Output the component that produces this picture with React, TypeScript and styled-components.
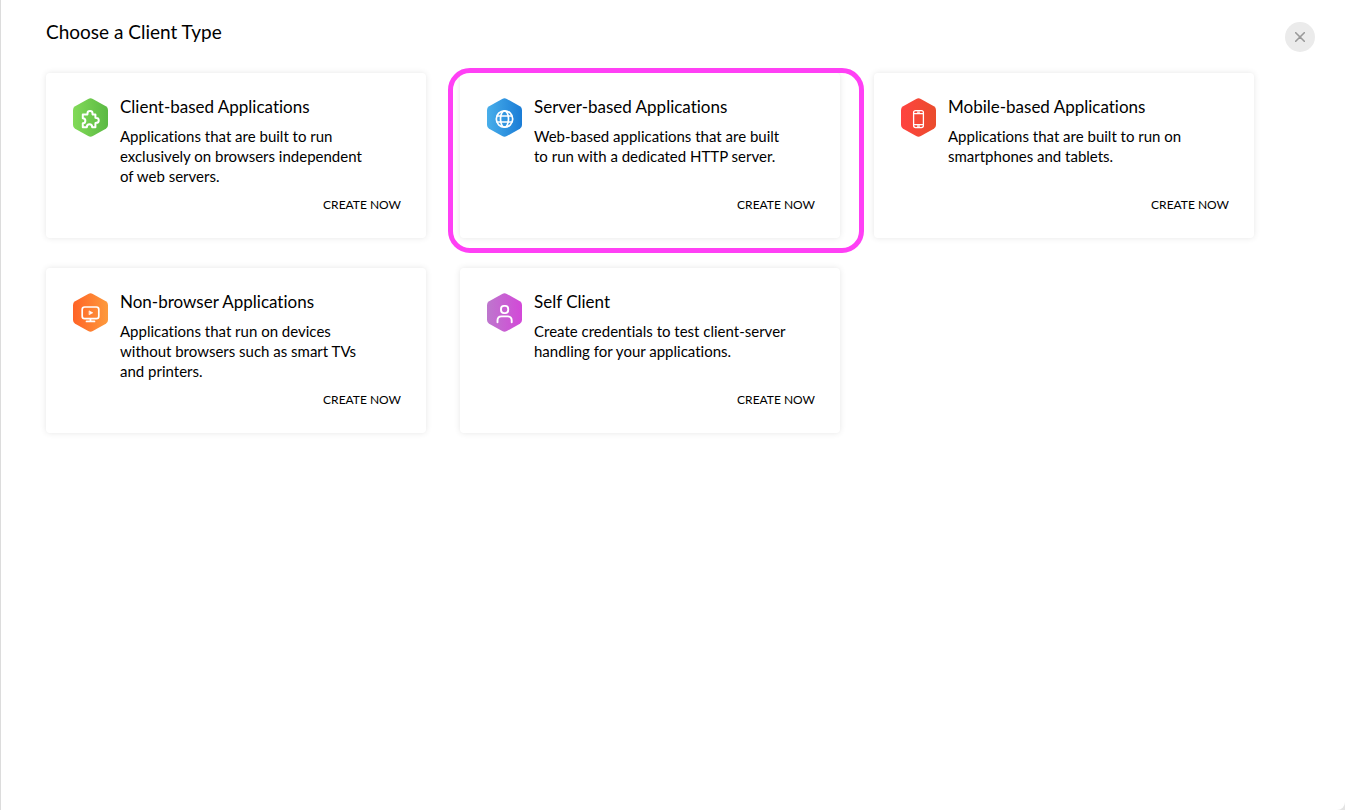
import React from "react";
import styled, { createGlobalStyle } from "styled-components";

const GlobalStyle = createGlobalStyle`
  *, *::before, *::after { box-sizing: border-box; }
  body { margin: 0; background: #e4e4e4; }
  body, button {
    font-family: Lato, "Open Sans", sans-serif;
    font-variant-ligatures: none;
    color: #000;
  }
`;

const Page = styled.main`
  min-height: 100vh;
  padding: 19px 30px 40px 45px;
  background: #fff;
  border-left: 1px solid #dcdcdc;
  border-bottom-right-radius: 8px;
`;

const Header = styled.header`
  display: flex;
  justify-content: space-between;
  align-items: flex-start;
  height: 54px;
`;

const Heading = styled.h1`
  margin: 0;
  font-size: 19px;
  font-weight: 400;
  line-height: 26px;
`;

const CloseButton = styled.button`
  display: flex;
  align-items: center;
  justify-content: center;
  width: 30px;
  height: 30px;
  margin-top: 3px;
  padding: 0;
  border: 0;
  border-radius: 50%;
  background: #ebebeb;
  cursor: pointer;
`;

const CardGrid = styled.section`
  display: grid;
  grid-template-columns: repeat(auto-fill, 380px);
  gap: 30px 34px;
`;

const Card = styled.article`
  position: relative;
  display: flex;
  gap: 12px;
  min-height: 165px;
  padding: 23px 25px 21px 27px;
  border-radius: 4px;
  background: #fff;
  box-shadow: 0 0 6px rgba(0, 0, 0, 0.1);
`;

const Highlight = styled.span`
  position: absolute;
  inset: -5px -24px -15px -12px;
  border: 5px solid #ff40f5;
  border-radius: 22px;
  pointer-events: none;
`;

const Badge = styled.svg`
  flex: none;
  width: 35px;
  height: 39px;
  margin-top: 2px;
`;

const CardBody = styled.div`
  display: flex;
  flex: 1;
  flex-direction: column;
`;

const CardTitle = styled.h2`
  margin: 0 0 9px;
  font-size: 17px;
  font-weight: 400;
  line-height: 21px;
`;

const Description = styled.p`
  max-width: 256px;
  margin: 0;
  font-size: 15px;
  line-height: 20px;
`;

const CreateButton = styled.button`
  align-self: flex-end;
  margin-top: auto;
  padding: 0;
  border: 0;
  background: none;
  font-size: 12px;
  line-height: 24px;
  cursor: pointer;
`;

type ClientType = {
  id: string;
  title: string;
  description: string;
  colors: [string, string];
  glyph: React.ReactNode;
  highlighted?: boolean;
};

const clientTypes: ClientType[] = [
  {
    id: "client",
    title: "Client-based Applications",
    description:
      "Applications that are built to run exclusively on browsers independent of web servers.",
    colors: ["#82da58", "#5ab943"],
    glyph: (
      <path
        strokeWidth="2"
        d="M9.8 16.6H13.8C14.6 16.6 14.5 16 14.5 15.2C14.5 12.1 19.5 12.1 19.5 15.2C19.5 16 19.4 16.6 20.2 16.6H22.4V19.4C22.4 20.1 23 20 23.4 20C26.5 20 26.5 24.8 23.4 24.8C23 24.8 22.4 24.7 22.4 25.4V29.2H19.2C19.2 25.2 13.8 25.2 13.8 29.2H9.8V25.2C13.2 25.2 13.2 20.2 9.8 20.2Z"
      />
    ),
  },
  {
    id: "server",
    title: "Server-based Applications",
    description: "Web-based applications that are built to run with a dedicated HTTP server.",
    colors: ["#48aeea", "#1a7cd6"],
    highlighted: true,
    glyph: (
      <>
        <circle cx="17.5" cy="21" r="8.2" />
        <ellipse cx="17.5" cy="21" rx="4" ry="8.2" />
        <path d="M10.3 18H24.7M10.3 24H24.7" />
      </>
    ),
  },
  {
    id: "mobile",
    title: "Mobile-based Applications",
    description: "Applications that are built to run on smartphones and tablets.",
    colors: ["#ff4340", "#ea4c2c"],
    glyph: (
      <g strokeWidth="1.3">
        <rect x="12.6" y="12.6" width="9.8" height="17" rx="2" />
        <path d="M12.6 15.6H22.4M12.6 26.6H22.4M16.5 14.1H18.5M16.5 28.1H18.5" />
      </g>
    ),
  },
  {
    id: "nonbrowser",
    title: "Non-browser Applications",
    description: "Applications that run on devices without browsers such as smart TVs and printers.",
    colors: ["#ff6326", "#fd9a3c"],
    glyph: (
      <>
        <rect x="9.2" y="14" width="16.6" height="11.6" rx="2.4" />
        <path d="M17.5 25.8V28.2M13.5 28.4H21.5" />
        <path d="M16.4 18L19.8 19.8L16.4 21.6Z" fill="#fff" strokeWidth=".6" />
      </>
    ),
  },
  {
    id: "self",
    title: "Self Client",
    description: "Create credentials to test client-server handling for your applications.",
    colors: ["#bd77cd", "#d348d8"],
    glyph: (
      <g strokeWidth="1.9">
        <rect x="14" y="12.9" width="7.2" height="7.2" rx="3" />
        <path d="M10.5 29.2V27.6C10.5 24.8 12 23.4 14.6 23.4H20.6C23.2 23.4 24.7 24.8 24.7 27.6V29.2" />
      </g>
    ),
  },
];

function HexBadge({ id, colors, children }: { id: string; colors: [string, string]; children: React.ReactNode }) {
  return (
    <Badge viewBox="0 0 35 39" aria-hidden="true">
      <defs>
        <linearGradient id={`hex-${id}`}>
          <stop offset="0" stopColor={colors[0]} />
          <stop offset="1" stopColor={colors[1]} />
        </linearGradient>
      </defs>
      <path
        fill={`url(#hex-${id})`}
        d="M15.2.9Q17.5-.3 19.8.9L32.9 8.2Q35 9.5 35 11.9V27.1Q35 29.5 32.9 30.8L19.8 38.1Q17.5 39.3 15.2 38.1L2.1 30.8Q0 29.5 0 27.1V11.9Q0 9.5 2.1 8.2Z"
      />
      <g fill="none" stroke="#fff" strokeWidth="1.7" strokeLinejoin="round" strokeLinecap="round">
        {children}
      </g>
    </Badge>
  );
}

export default function App() {
  return (
    <>
      <GlobalStyle />
      <Page>
        <Header>
          <Heading>Choose a Client Type</Heading>
          <CloseButton type="button" aria-label="Close">
            <svg width="10" height="10" viewBox="0 0 10 10" aria-hidden="true">
              <path d="M.7.7L9.3 9.3M9.3.7L.7 9.3" stroke="#999" strokeWidth="1.6" strokeLinecap="round" />
            </svg>
          </CloseButton>
        </Header>
        <CardGrid>
          {clientTypes.map((type) => (
            <Card key={type.id}>
              <HexBadge id={type.id} colors={type.colors}>
                {type.glyph}
              </HexBadge>
              <CardBody>
                <CardTitle>{type.title}</CardTitle>
                <Description>{type.description}</Description>
                <CreateButton type="button">CREATE NOW</CreateButton>
              </CardBody>
              {type.highlighted && <Highlight />}
            </Card>
          ))}
        </CardGrid>
      </Page>
    </>
  );
}
